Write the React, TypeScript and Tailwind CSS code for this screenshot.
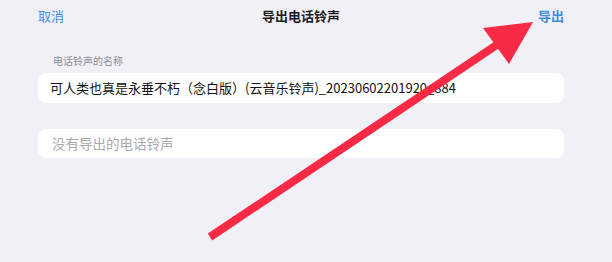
const CJK = "font-['Noto_Sans_CJK_SC','Noto_Sans',sans-serif]";

// Red annotation arrow drawn over the sheet, from lower-left up to the export button.
function Arrow() {
  return (
    <svg className="pointer-events-none absolute inset-0" width="612" height="262" viewBox="0 0 612 262">
      <polygon points="207.8,233.6 212.2,240.4 500.5,47.2 496.1,40.5" fill="#f92a45" />
      <polygon points="533,22 483,28 509,64" fill="#f92a45" />
    </svg>
  );
}

export default function App() {
  return (
    <div className={`relative h-[262px] w-[612px] overflow-hidden bg-[#f1f0f6] ${CJK}`}>
      <div className="flex h-[30px] items-center justify-between pl-[38px] pr-[48px] pt-[1px]">
        <span className="text-[13px] text-[#3d8fdc]">取消</span>
        <span className="text-[13px] font-semibold text-[#1c1c1e]">导出电话铃声</span>
        <span className="text-[13px] font-semibold text-[#3d8fdc]">导出</span>
      </div>

      <div className="mt-[25px] px-[53px] text-[10px] leading-[12px] text-[#8e8e93]">电话铃声的名称</div>

      <div className="ml-[38px] mr-[48px] mt-[6px] flex h-[30px] items-center rounded-[8px] bg-white pl-[12px] text-[13px] text-[#111]">
        可人类也真是永垂不朽（念白版）(云音乐铃声)_20230602201920_884
      </div>

      <div className="ml-[38px] mr-[48px] mt-[26px] flex h-[29px] items-center rounded-[8px] bg-white pl-[14px] text-[13.5px] text-[#a9a9ae]">
        没有导出的电话铃声
      </div>

      <Arrow />
    </div>
  );
}
